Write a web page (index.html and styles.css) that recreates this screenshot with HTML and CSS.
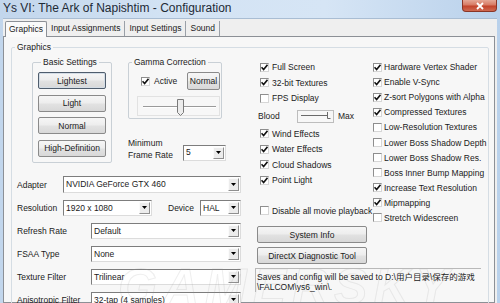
FILE: index.html
```html
<!DOCTYPE html>
<html>
<head>
<meta charset="utf-8">
<link rel="stylesheet" href="styles.css">
</head>
<body>
<div class="window">
  <div class="titlebar">
    <span class="title">Ys VI: The Ark of Napishtim - Configuration</span>
    <div class="close"><svg width="10" height="8" viewBox="0 0 10 8"><path d="M2 1 L8 7 M8 1 L2 7" stroke="#fff" stroke-width="1.8"/></svg></div>
  </div>
  <div class="client">
    <div class="tabs">
      <div class="tab active">Graphics</div>
      <div class="tab">Input Assignments</div>
      <div class="tab">Input Settings</div>
      <div class="tab">Sound</div>
    </div>
    <div class="panel">
      <fieldset class="group main">
        <legend>Graphics</legend>
        <div class="cols">
          <div class="col1">
            <div class="top">
              <fieldset class="group basic">
                <legend>Basic Settings</legend>
                <div class="btn default">Lightest</div>
                <div class="btn">Light</div>
                <div class="btn">Normal</div>
                <div class="btn">High-Definition</div>
              </fieldset>
              <div class="gcol">
                <fieldset class="group gamma">
                  <legend>Gamma Correction</legend>
                  <div class="grow">
                    <span class="box on"><svg width="7" height="7" viewBox="0 0 7 7"><path d="M0.5 3.2 L2.6 5.5 L6.5 0.8" fill="none" stroke="#111" stroke-width="1.6"/></svg></span>
                    <span>Active</span>
                    <div class="btn small">Normal</div>
                  </div>
                  <div class="gslider">
                    <svg width="83" height="20" viewBox="0 0 83 20">
                      <rect x="0.5" y="0.5" width="82" height="19" fill="#f7f7f7" stroke="#e2e2e2"/>
                      <line x1="6" y1="10.5" x2="79" y2="10.5" stroke="#9a9a9a"/>
                      <line x1="6" y1="11.5" x2="79" y2="11.5" stroke="#ffffff"/>
                      <path d="M40.5 3.5 H46.5 V16.5 L43.5 19.5 L40.5 16.5 Z" fill="#ececec" stroke="#7a7a7a"/>
                    </svg>
                  </div>
                </fieldset>
                <div class="minrow">
                  <div class="minlabel">Minimum<br>Frame Rate</div>
                  <div class="combo mincombo"><span class="val">5</span><span class="arrow"><svg width="5" height="4" viewBox="0 0 5 4"><path d="M0 0 H5 L2.5 3 Z" fill="#000"/></svg></span></div>
                </div>
              </div>
            </div>
            <div class="frow">
              <span class="flabel short">Adapter</span>
              <div class="combo adapter"><span class="val">NVIDIA GeForce GTX 460</span><span class="arrow"><svg width="5" height="4" viewBox="0 0 5 4"><path d="M0 0 H5 L2.5 3 Z" fill="#000"/></svg></span></div>
            </div>
            <div class="frow">
              <span class="flabel short">Resolution</span>
              <div class="combo res"><span class="val">1920 x 1080</span><span class="arrow"><svg width="5" height="4" viewBox="0 0 5 4"><path d="M0 0 H5 L2.5 3 Z" fill="#000"/></svg></span></div>
              <span class="dlabel">Device</span>
              <div class="combo device"><span class="val">HAL</span><span class="arrow"><svg width="5" height="4" viewBox="0 0 5 4"><path d="M0 0 H5 L2.5 3 Z" fill="#000"/></svg></span></div>
            </div>
            <div class="frow">
              <span class="flabel">Refresh Rate</span>
              <div class="combo wide"><span class="val">Default</span><span class="arrow"><svg width="5" height="4" viewBox="0 0 5 4"><path d="M0 0 H5 L2.5 3 Z" fill="#000"/></svg></span></div>
            </div>
            <div class="frow">
              <span class="flabel">FSAA Type</span>
              <div class="combo wide"><span class="val">None</span><span class="arrow"><svg width="5" height="4" viewBox="0 0 5 4"><path d="M0 0 H5 L2.5 3 Z" fill="#000"/></svg></span></div>
            </div>
            <div class="frow">
              <span class="flabel">Texture Filter</span>
              <div class="combo wide"><span class="val">Trilinear</span><span class="arrow"><svg width="5" height="4" viewBox="0 0 5 4"><path d="M0 0 H5 L2.5 3 Z" fill="#000"/></svg></span></div>
            </div>
            <div class="frow">
              <span class="flabel">Anisotropic Filter</span>
              <div class="combo wide"><span class="val">32-tap (4 samples)</span><span class="arrow"><svg width="5" height="4" viewBox="0 0 5 4"><path d="M0 0 H5 L2.5 3 Z" fill="#000"/></svg></span></div>
            </div>
          </div>

          <div class="col2">
            <div class="check"><span class="box on"><svg width="7" height="7" viewBox="0 0 7 7"><path d="M0.5 3.2 L2.6 5.5 L6.5 0.8" fill="none" stroke="#111" stroke-width="1.6"/></svg></span>Full Screen</div>
            <div class="check"><span class="box on"><svg width="7" height="7" viewBox="0 0 7 7"><path d="M0.5 3.2 L2.6 5.5 L6.5 0.8" fill="none" stroke="#111" stroke-width="1.6"/></svg></span>32-bit Textures</div>
            <div class="check"><span class="box"></span>FPS Display</div>
            <div class="blood">
              <span class="bl">Blood</span>
              <svg class="bslider" width="37" height="13" viewBox="0 0 37 13">
                <rect x="0.5" y="0.5" width="36" height="12" fill="#f7f7f7" stroke="#bdbdbd"/>
                <line x1="4" y1="5.5" x2="31" y2="5.5" stroke="#6a6a6a"/>
                <path d="M30.5 2 V8.5 H33.5" fill="none" stroke="#6a6a6a"/>
              </svg>
              <span>Max</span>
            </div>
            <div class="check"><span class="box on"><svg width="7" height="7" viewBox="0 0 7 7"><path d="M0.5 3.2 L2.6 5.5 L6.5 0.8" fill="none" stroke="#111" stroke-width="1.6"/></svg></span>Wind Effects</div>
            <div class="check"><span class="box on"><svg width="7" height="7" viewBox="0 0 7 7"><path d="M0.5 3.2 L2.6 5.5 L6.5 0.8" fill="none" stroke="#111" stroke-width="1.6"/></svg></span>Water Effects</div>
            <div class="check"><span class="box on"><svg width="7" height="7" viewBox="0 0 7 7"><path d="M0.5 3.2 L2.6 5.5 L6.5 0.8" fill="none" stroke="#111" stroke-width="1.6"/></svg></span>Cloud Shadows</div>
            <div class="check"><span class="box on"><svg width="7" height="7" viewBox="0 0 7 7"><path d="M0.5 3.2 L2.6 5.5 L6.5 0.8" fill="none" stroke="#111" stroke-width="1.6"/></svg></span>Point Light</div>
            <div class="check movie"><span class="box"></span>Disable all movie playback</div>
            <div class="btn wbtn sysinfo">System Info</div>
            <div class="btn wbtn">DirectX Diagnostic Tool</div>
            <div class="note">Saves and config will be saved to D:\用户目录\保存的游戏<br>\FALCOM\ys6_win\.</div>
          </div>

          <div class="col3">
            <div class="check"><span class="box on"><svg width="7" height="7" viewBox="0 0 7 7"><path d="M0.5 3.2 L2.6 5.5 L6.5 0.8" fill="none" stroke="#111" stroke-width="1.6"/></svg></span>Hardware Vertex Shader</div>
            <div class="check"><span class="box on"><svg width="7" height="7" viewBox="0 0 7 7"><path d="M0.5 3.2 L2.6 5.5 L6.5 0.8" fill="none" stroke="#111" stroke-width="1.6"/></svg></span>Enable V-Sync</div>
            <div class="check"><span class="box on"><svg width="7" height="7" viewBox="0 0 7 7"><path d="M0.5 3.2 L2.6 5.5 L6.5 0.8" fill="none" stroke="#111" stroke-width="1.6"/></svg></span>Z-sort Polygons with Alpha</div>
            <div class="check"><span class="box on"><svg width="7" height="7" viewBox="0 0 7 7"><path d="M0.5 3.2 L2.6 5.5 L6.5 0.8" fill="none" stroke="#111" stroke-width="1.6"/></svg></span>Compressed Textures</div>
            <div class="check"><span class="box"></span>Low-Resolution Textures</div>
            <div class="check"><span class="box"></span>Lower Boss Shadow Depth</div>
            <div class="check"><span class="box"></span>Lower Boss Shadow Res.</div>
            <div class="check"><span class="box"></span>Boss Inner Bump Mapping</div>
            <div class="check"><span class="box on"><svg width="7" height="7" viewBox="0 0 7 7"><path d="M0.5 3.2 L2.6 5.5 L6.5 0.8" fill="none" stroke="#111" stroke-width="1.6"/></svg></span>Increase Text Resolution</div>
            <div class="check"><span class="box on"><svg width="7" height="7" viewBox="0 0 7 7"><path d="M0.5 3.2 L2.6 5.5 L6.5 0.8" fill="none" stroke="#111" stroke-width="1.6"/></svg></span>Mipmapping</div>
            <div class="check"><span class="box"></span>Stretch Widescreen</div>
          </div>
        </div>
      </fieldset>
    </div>
  </div>
  <div class="watermark">GAMERSKY</div>
</div>
</body>
</html>
```
FILE: styles.css
```css
* { box-sizing: border-box; }
html, body { margin: 0; padding: 0; }
body {
  width: 500px; height: 303px; overflow: hidden;
  font-family: "Liberation Sans", Arial, "Noto Sans CJK SC", sans-serif;
  font-size: 8.5px; color: #1b1b1b;
}
.window {
  position: relative; width: 500px; height: 303px; overflow: hidden;
  display: flex; flex-direction: column;
  background: linear-gradient(90deg, #c2d6ec 0%, #d3e3f4 35%, #d6e5f5 65%, #b9d1eb 100%);
}
.titlebar { height: 18px; display: flex; justify-content: space-between; align-items: flex-start; flex: none; }
.title { font-size: 12px; line-height: 14px; padding: 1px 0 0 3px; color: #1e2a36; }
.close {
  width: 35px; height: 12px; margin-right: 3px;
  border: 1px solid #8a3526; border-top: none; border-radius: 0 0 4px 4px;
  background: linear-gradient(#e5a796 0%, #d77a64 45%, #c2432b 55%, #cf6a52 100%);
  display: flex; align-items: center; justify-content: center;
}
.client {
  flex: 1; margin: 0 3px; background: #efefef;
  display: flex; flex-direction: column; min-height: 0;
  border-top: 1px solid #a9bdd3;
}
.tabs { display: flex; align-items: flex-end; height: 17px; padding-left: 2px; flex: none; }
.tab {
  height: 15px; line-height: 14px; padding: 0 4px 0 4px;
  border-right: 1px solid #9aa0a8; white-space: nowrap;
}
.tab.active {
  height: 16px; padding: 0 3px; line-height: 14px;
  border: 1px solid #8c9096; border-bottom: none; border-radius: 2px 2px 0 0;
  background: #fafafa; margin-bottom: -1px; position: relative; z-index: 1;
}
.panel {
  flex: 1; min-height: 0; margin-right: 2px;
  border: 1px solid #8c9096; background: #f7f7f7;
}
.group {
  margin: 0; padding: 0; min-width: 0;
  border: 1px solid #d0d7de; border-radius: 2px;
}
.group > legend { padding: 0 2px; margin-left: 3px; line-height: 10px; }
.main { margin: 5px 5px 0 7px; height: 300px; border-color: #d5dde4; }
.cols { display: grid; grid-template-columns: 244px 116px 1fr; }

/* column 1 */
.col1 { padding-left: 5px; }
.top { display: flex; margin: 5px 0 0 15px; align-items: flex-start; }
.basic { width: 80px; padding: 5px 0 5px 5px; border-color: #c9d0d6; }
.basic .btn { width: 68px; height: 17px; margin-bottom: 5.5px; }
.basic .btn:last-child { margin-bottom: 0; }
.btn {
  display: flex; align-items: center; justify-content: center;
  border: 1px solid #8a8a8a; border-radius: 2px; white-space: nowrap;
  background: linear-gradient(#f6f6f6 0%, #ededed 48%, #e2e2e2 52%, #d8d8d8 100%);
  color: #1b1b1b;
}
.btn.default { border-color: #4f5d6d; box-shadow: inset 0 0 0 1px #d4dde6; }
.gcol { margin-left: 16px; }
.gamma { width: 94px; padding: 5px 0 2px 0; border-color: #c9d0d6; }
.grow { display: flex; align-items: center; height: 18px; padding-left: 12px; }
.grow .box { margin-right: 4px; }
.btn.small { width: 33px; height: 18px; margin-left: auto; margin-right: 1px; }
.gslider { margin: 6px 0 0 8px; height: 20px; }
.gslider svg { display: block; }
.minrow { display: flex; align-items: flex-start; margin-top: 18px; }
.minlabel { width: 55px; line-height: 12.5px; margin-top: -0.5px; }
.mincombo { width: 43px; height: 14px; margin-top: 8px; }

.frow { display: flex; align-items: center; height: 16px; margin-bottom: 7px; }
.col1 > .frow:nth-of-type(2) { margin-top: 14px; }
.flabel { width: 74px; white-space: nowrap; }
.flabel.short { width: 46px; }
.combo {
  display: flex; height: 16px; background: #fff;
  border: 1px solid; border-color: #7d7d7d #dcdcdc #dcdcdc #7d7d7d;
}
.combo .val { flex: 1; padding-left: 2px; line-height: 14px; white-space: nowrap; overflow: hidden; }
.combo .arrow {
  width: 11px; margin: 1px; display: flex; align-items: center; justify-content: center;
  background: #ececec; border: 1px solid; border-color: #fbfbfb #8f8f8f #8f8f8f #fbfbfb;
}
.mincombo .val { line-height: 12px; }
.adapter { width: 178px; height: 17px; }
.res { width: 89px; }
.dlabel { margin-left: 16px; width: 32px; }
.device { width: 41px; }
.wide { width: 150px; }

/* column 2 */
.col2 { padding-top: 7.5px; }
.check { display: flex; align-items: center; height: 15.5px; white-space: nowrap; }
.box {
  flex: none; width: 9px; height: 9px; background: #fff;
  border: 1px solid; border-color: #8e8e8e #d6d6d6 #d6d6d6 #8e8e8e;
  display: flex; align-items: center; justify-content: center;
}
.col2 .box { margin: 0 3px 0 4px; }
.blood { display: flex; align-items: center; height: 20px; padding-left: 2px; }
.bl { width: 39px; }
.bslider { display: block; margin-right: 4px; }
.check.movie { margin-top: 15px; }
.wbtn { width: 110px; height: 17px; margin-left: 1px; }
.sysinfo { margin-top: 7.5px; margin-bottom: 4px; }
.note {
  margin-top: 4px; width: 226px; margin-left: -1px;
  border-top: 1px solid #b9b9b9; border-left: 1px solid #b9b9b9;
  padding: 3px 0 0 1px; line-height: 10px; white-space: nowrap;
  position: relative; z-index: 1;
}

/* column 3 */
.col3 { padding-top: 7.5px; }
.col3 .check { height: 15.1px; }
.col3 .box { margin: 0 2px 0 1px; }

.watermark {
  position: absolute; left: 118px; top: 258px;
  font-size: 50px; font-weight: bold; font-style: italic; letter-spacing: 6px;
  color: transparent; -webkit-text-stroke: 1px rgba(150, 150, 150, 0.16);
  pointer-events: none; white-space: nowrap;
}
```
